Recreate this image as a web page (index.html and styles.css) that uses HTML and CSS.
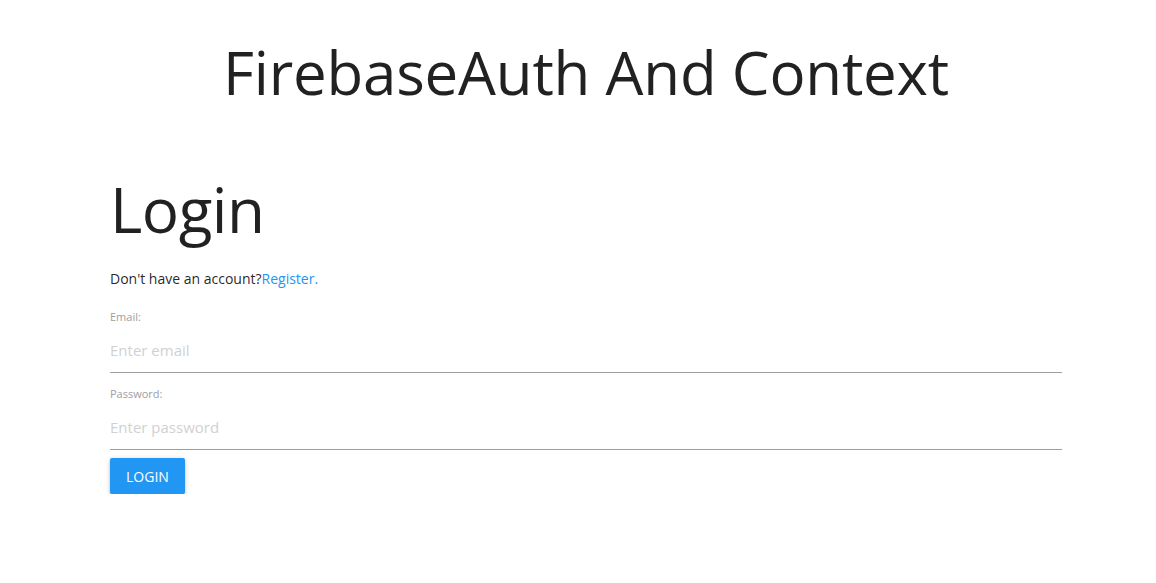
FILE: index.html
```html
<!DOCTYPE html>
<html>
<head>
<meta charset="utf-8">
<link rel="stylesheet" href="styles.css">
</head>
<body>
<div class="app">
  <h1 class="title">FirebaseAuth And Context</h1>
  <div class="container">
    <h2 class="heading">Login</h2>
    <p class="note">Don't have an account?<a href="#" class="link">Register.</a></p>
    <form class="form">
      <div class="field">
        <label class="label">Email:</label>
        <input class="input" type="email" placeholder="Enter email">
      </div>
      <div class="field">
        <label class="label">Password:</label>
        <input class="input" type="password" placeholder="Enter password">
      </div>
      <button type="button" class="btn">LOGIN</button>
    </form>
  </div>
</div>
</body>
</html>
```

FILE: styles.css
```css
html, body {
  margin: 0;
  padding: 0;
  background: #fff;
}
body {
  font-family: "Open Sans", "Noto Sans", sans-serif;
  color: rgba(0,0,0,0.87);
}
.app {
  padding-left: 16px;
}
.title {
  margin: 0;
  padding-top: 28px;
  text-align: center;
  font-weight: 400;
  font-size: 60px;
  line-height: 88px;
  letter-spacing: -0.2px;
}
.container {
  width: 952px;
  margin: 0 auto;
  padding-top: 50px;
}
.heading {
  margin: 0;
  font-weight: 400;
  font-size: 62px;
  line-height: 86px;
  letter-spacing: -0.5px;
}
.note {
  margin: 17px 0 0;
  font-size: 14px;
  line-height: 20px;
}
.link {
  color: #2196f3;
  text-decoration: none;
}
.form {
  margin-top: 21px;
  display: flex;
  flex-direction: column;
  align-items: flex-start;
  gap: 14px;
}
.field {
  display: flex;
  flex-direction: column;
  align-self: stretch;
}
.field + .btn {
  margin-top: -6px;
}
.label {
  font-size: 11px;
  line-height: 14px;
  padding-bottom: 4px;
  color: #9e9e9e;
}
.input {
  height: 44px;
  border: none;
  border-bottom: 1px solid #9e9e9e;
  padding: 0;
  margin: 0;
  font-family: inherit;
  font-size: 15px;
  outline: none;
  background: transparent;
}
.input::placeholder {
  color: #d1d1d1;
}
.btn {
  height: 36px;
  padding: 0 16px;
  border: none;
  border-radius: 2px;
  background: #2196f3;
  color: #fff;
  font-family: inherit;
  font-size: 14px;
  box-shadow: 0 2px 2px 0 rgba(0,0,0,0.14), 0 3px 1px -2px rgba(0,0,0,0.12), 0 1px 5px 0 rgba(0,0,0,0.2);
}
```
